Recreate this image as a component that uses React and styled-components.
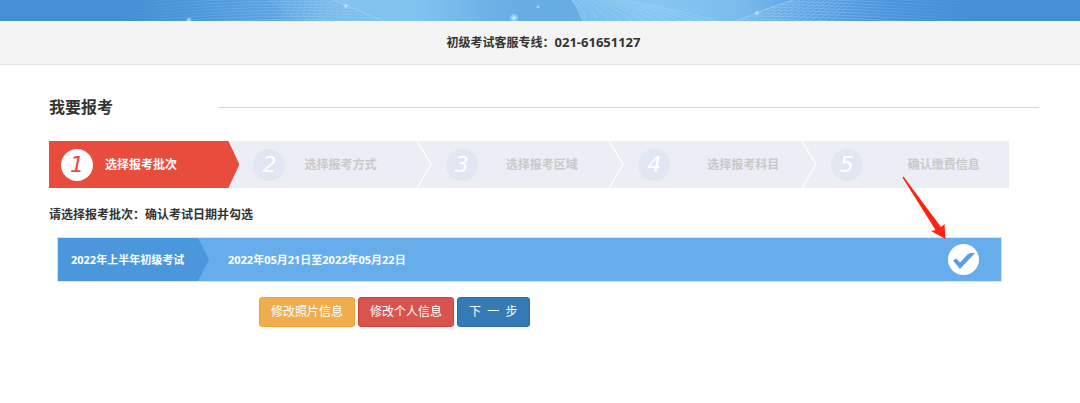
import React, { useState } from 'react';
import styled, { createGlobalStyle, css } from 'styled-components';

const STEPS = [
  { label: '选择报考批次', gap: 12 },
  { label: '选择报考方式', gap: 19 },
  { label: '选择报考区域', gap: 28 },
  { label: '选择报考科目', gap: 37 },
  { label: '确认缴费信息', gap: 45 },
];

// fine parallel curves of one wave
const waveLines = (count, build) => Array.from({ length: count }, (_, i) => <path key={i} d={build(i)} />);

const BannerArt = () => (
  <BannerSvg viewBox="0 0 1080 21" preserveAspectRatio="none" aria-hidden="true">
    <defs>
      <linearGradient id="sky" x1="0" x2="1" y1="0" y2="0">
        <stop offset="0" stopColor="#4590d3" />
        <stop offset="0.12" stopColor="#4590d3" />
        <stop offset="0.18" stopColor="#4b97db" />
        <stop offset="0.25" stopColor="#5aa3e1" />
        <stop offset="0.3" stopColor="#74b5e9" />
        <stop offset="0.38" stopColor="#7dc0ee" />
        <stop offset="0.48" stopColor="#66ade4" />
        <stop offset="0.53" stopColor="#66ade5" />
        <stop offset="0.6" stopColor="#80c2f0" />
        <stop offset="0.68" stopColor="#79b9ec" />
        <stop offset="0.75" stopColor="#5ba2e4" />
        <stop offset="0.83" stopColor="#4a94dc" />
        <stop offset="0.9" stopColor="#4590d3" />
        <stop offset="1" stopColor="#4590d3" />
      </linearGradient>
      <linearGradient id="middle" x1="0" x2="1" y1="0" y2="0">
        <stop offset="0" stopColor="#8fd0f6" stopOpacity="0.5" />
        <stop offset="1" stopColor="#8fd0f6" stopOpacity="0" />
      </linearGradient>
      <radialGradient id="glow">
        <stop offset="0" stopColor="#e8f8ff" />
        <stop offset="0.4" stopColor="#b5e2f8" stopOpacity="0.7" />
        <stop offset="1" stopColor="#b5e2f8" stopOpacity="0" />
      </radialGradient>
      <linearGradient id="fade" x1="0" x2="1" y1="0" y2="0">
        <stop offset="0.1" stopColor="#fff" stopOpacity="0" />
        <stop offset="0.3" stopColor="#fff" stopOpacity="1" />
        <stop offset="0.76" stopColor="#fff" stopOpacity="1" />
        <stop offset="0.9" stopColor="#fff" stopOpacity="0" />
      </linearGradient>
      <mask id="sides">
        <rect width="1080" height="21" fill="url(#fade)" />
      </mask>
      <clipPath id="leftWave">
        <path d="M0 0H333Q356 9 383 21H0Z" />
      </clipPath>
      <clipPath id="rightWave">
        <path d="M793 0Q762 10 736 21H1080V0Z" />
      </clipPath>
    </defs>
    <rect width="1080" height="21" fill="url(#sky)" />
    <path d="M333 0Q356 9 383 21H480V0Z" fill="url(#middle)" />
    <path d="M572 0Q579 10 583 21H736Q762 10 793 0Z" fill="url(#middle)" />
    <g mask="url(#sides)" fill="none" stroke="#b9def8" strokeWidth="0.8" opacity="0.4">
      <g clipPath="url(#leftWave)">
        {waveLines(18, i => `M120 ${i * 3 - 6}Q240 ${i * 3 - 22} 390 ${i * 3 - 14}`)}
        {waveLines(20, i => `M${270 + i * 5} 0L${300 + i * 6} 21`)}
      </g>
      {waveLines(12, i => `M${572 + i * 5} 0Q${590 + i * 9} 12 ${583 + i * 13} 24`)}
      <g clipPath="url(#rightWave)">
        {waveLines(18, i => `M730 ${i * 3 - 20}Q840 ${i * 3 - 20} 980 ${i * 3 - 10}`)}
        {waveLines(14, i => `M${790 + i * 5} 0L${740 + i * 7} 21`)}
      </g>
    </g>
    <path
      d="M333 0Q356 9 383 21M793 0Q762 10 736 21M572 0Q579 10 583 21"
      fill="none"
      stroke="#a8d8f6"
      opacity="0.6"
    />
    <circle cx="514" cy="18" r="5" fill="url(#glow)" />
    <circle cx="189" cy="20" r="3" fill="url(#glow)" />
    <circle cx="757" cy="13" r="3" fill="url(#glow)" />
    <circle cx="346" cy="6" r="3" fill="url(#glow)" />
    <circle cx="538" cy="7" r="2" fill="url(#glow)" />
  </BannerSvg>
);

const App = () => {
  const [checked, setChecked] = useState(true);

  return (
    <>
      <GlobalStyle />
      <Banner>
        <BannerArt />
      </Banner>
      <Hotline>
        初级考试客服专线：<HotlineNumber>021-61651127</HotlineNumber>
      </Hotline>

      <Content>
        <TitleRow>
          <Title>我要报考</Title>
          <TitleLine />
        </TitleRow>

        <StepList>
          {STEPS.map((step, index) => (
            <Step key={step.label} $active={index === 0} $gap={step.gap}>
              <StepNumber $active={index === 0}>{index + 1}</StepNumber>
              {step.label}
              {index > 0 && index < STEPS.length - 1 && (
                <Chevron viewBox="0 0 16 47" aria-hidden="true">
                  <path d="M1 0L15 23.5L1 47" fill="none" stroke="#fff" strokeWidth="1.2" />
                </Chevron>
              )}
            </Step>
          ))}
        </StepList>

        <Hint>请选择报考批次：确认考试日期并勾选</Hint>

        <Batch>
          <BatchName htmlFor="batch">2022年上半年初级考试</BatchName>
          <BatchDate>2022年05月21日至2022年05月22日</BatchDate>
          <CheckWrapper>
            <Checkbox id="batch" type="checkbox" checked={checked} onChange={e => setChecked(e.target.checked)} />
            {checked && (
              <CheckMark viewBox="0 0 31 31" aria-hidden="true">
                <path d="M5 16.5L8.5 14.5L12 18.5L19.5 10.5Q21 9 23 9H27L12 25Z" fill="#55a0e2" />
              </CheckMark>
            )}
          </CheckWrapper>
          <Arrow viewBox="0 0 44 64" aria-hidden="true">
            <path d="M0.5 1.5L1.5 0.5L39 51L42.5 48L43.5 63L29 55L33.5 54Z" fill="#ff2312" />
          </Arrow>
        </Batch>

        <Actions>
          <Button type="button" $color="#f0ad4e" $border="#eea236">
            修改照片信息
          </Button>
          <Button type="button" $color="#d9534f" $border="#d43f3a">
            修改个人信息
          </Button>
          <Button type="button" $color="#337ab7" $border="#2e6da4">
            下&nbsp; 一 &nbsp;步
          </Button>
        </Actions>
      </Content>
    </>
  );
};

export default App;

const GlobalStyle = createGlobalStyle`
  * {
    box-sizing: border-box;
  }

  body {
    margin: 0;
    background-color: #fff;
    color: #333;
    font-family: 'Open Sans', 'Noto Sans CJK SC', sans-serif;
    font-size: 12px;
    line-height: 18px;
  }
`;

const Banner = styled.header`
  height: 21px;
  background-color: #4590d3;
`;

const BannerSvg = styled.svg`
  display: block;
  width: 100%;
  height: 100%;
`;

const Hotline = styled.p`
  margin: 0;
  padding: 12px 0 12px 7px;
  border-bottom: 1px solid #e2e2e2;
  background-color: #f4f4f4;
  font-weight: bold;
  line-height: 18px;
  text-align: center;
`;

const HotlineNumber = styled.span`
  font-size: 13px;
`;

const Content = styled.main`
  padding: 30px 41px 0 49px;
`;

const TitleRow = styled.div`
  display: flex;
  align-items: center;
`;

const Title = styled.h1`
  flex: 0 0 169px;
  margin: 0;
  font-size: 16px;
  line-height: 24px;
`;

const TitleLine = styled.div`
  flex: 1;
  height: 1px;
  background-color: #d9d9d9;
`;

const StepList = styled.ol`
  display: flex;
  margin: 22px 30px 0 0;
  padding: 0;
  background-color: #ebeef4;
  list-style: none;
`;

const Step = styled.li`
  position: relative;
  display: flex;
  flex: 1;
  align-items: center;
  gap: ${({ $gap }) => `${$gap}px`};
  height: 47px;
  padding-left: 14px;
  color: #c9c9c9;
  font-weight: bold;

  ${({ $active }) =>
    $active &&
    css`
      padding-left: 12px;
      background-color: #e84c3d;
      color: #fff;
      clip-path: polygon(0 0, calc(100% - 11px) 0, 100% 50%, calc(100% - 11px) 100%, 0 100%);
    `}
`;

const StepNumber = styled.span`
  flex: none;
  width: 32px;
  height: 32px;
  border-radius: 50%;
  background-color: ${({ $active }) => ($active ? '#fff' : '#e0e7f2')};
  color: ${({ $active }) => ($active ? '#e84c3d' : '#fff')};
  font-family: 'DejaVu Sans', sans-serif;
  font-size: 22px;
  font-style: italic;
  font-weight: normal;
  line-height: 32px;
  text-align: center;
`;

const Chevron = styled.svg`
  position: absolute;
  top: 0;
  right: 0;
  width: 16px;
  height: 47px;
`;

const Hint = styled.p`
  margin: 18px 0 13px;
  font-weight: bold;
`;

const Batch = styled.div`
  position: relative;
  display: flex;
  align-items: center;
  height: 45px;
  margin: 0 37px 0 8px;
  border: 1px solid #d5e6f7;
  background-color: #67adec;
  color: #fff;
  font-size: 11px;
  font-weight: bold;
`;

const BatchName = styled.label`
  display: flex;
  flex: 0 0 151px;
  align-items: center;
  align-self: stretch;
  padding-left: 13px;
  background-color: #4a98db;
  clip-path: polygon(0 0, calc(100% - 11px) 0, 100% 50%, calc(100% - 11px) 100%, 0 100%);
`;

const BatchDate = styled.span`
  flex: 1;
  padding-left: 19px;
`;

const CheckWrapper = styled.span`
  position: relative;
  flex: none;
  width: 31px;
  height: 31px;
  margin-right: 22px;
`;

const Checkbox = styled.input`
  display: block;
  width: 31px;
  height: 31px;
  margin: 0;
  border-radius: 50%;
  background-color: #fff;
  appearance: none;
  cursor: pointer;
`;

const CheckMark = styled.svg`
  position: absolute;
  inset: 0;
  pointer-events: none;
`;

const Arrow = styled.svg`
  position: absolute;
  top: -62px;
  right: 55px;
  width: 44px;
  height: 64px;
  pointer-events: none;
`;

const Actions = styled.div`
  display: flex;
  gap: 3px;
  padding: 15px 0 24px 210px;
`;

const Button = styled.button`
  padding: 5px 11px;
  border: 1px solid ${({ $border }) => $border};
  border-radius: 3px;
  background-color: ${({ $color }) => $color};
  color: #fff;
  font-family: inherit;
  font-size: 12px;
  line-height: 18px;
  cursor: pointer;
`;
